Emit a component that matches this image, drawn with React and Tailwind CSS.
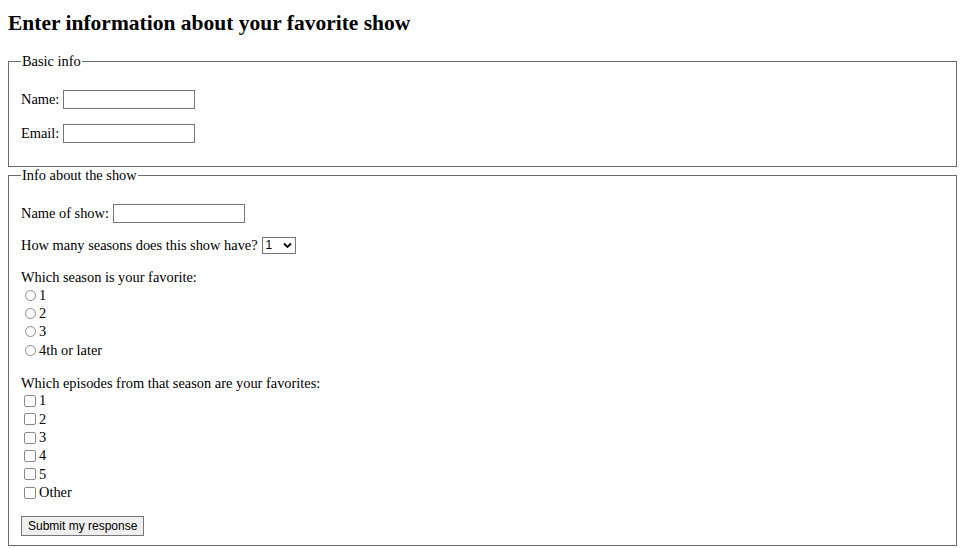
import React from 'react';

const seasons = ['1', '2', '3', '4th or later'];
const episodes = ['1', '2', '3', '4', '5', 'Other'];

const TextInput = () => (
  <input type="text" className="w-[132px] h-[19px] border border-[#767676] bg-white px-1 text-[13px] outline-none" />
);

const Radio = ({ label }) => (
  <label className="flex items-center h-[18.4px]">
    <span className="ml-[4px] mr-[3px] w-[11px] h-[11px] rounded-full border border-[#8a8a8a] bg-white" />
    <span>{label}</span>
  </label>
);

const Check = ({ label }) => (
  <label className="flex items-center h-[18.4px]">
    <span className="ml-[3px] mr-[3px] w-[12px] h-[12px] rounded-[2px] border border-[#8a8a8a] bg-white" />
    <span>{label}</span>
  </label>
);

export default function App() {
  return (
    <div className="min-h-screen bg-white text-black font-['Liberation_Serif','Times_New_Roman',serif] text-[14.4px] leading-[15px] pl-2 pr-[7px]">
      <h2 className="pt-[11px] text-[21.5px] leading-[24px] font-bold">Enter information about your favorite show</h2>

      <fieldset className="mt-[19px] border border-[#6b6b6b] pl-3 pr-3 pb-[23px]">
        <legend className="px-[1px] leading-[15px]">Basic info</legend>
        <div className="mt-[21px] flex items-center gap-[4px]">
          <span>Name:</span>
          <TextInput />
        </div>
        <div className="mt-[15px] flex items-center gap-[4px]">
          <span>Email:</span>
          <TextInput />
        </div>
      </fieldset>

      <fieldset className="mt-[1px] border border-[#6b6b6b] pl-3 pr-3 pb-[9px]">
        <legend className="px-[1px] leading-[15px]">Info about the show</legend>
        <div className="mt-[21px] flex items-center gap-[4px]">
          <span>Name of show:</span>
          <TextInput />
        </div>
        <div className="mt-[14px] flex items-center gap-[4px]">
          <span>How many seasons does this show have?</span>
          <div className="flex items-center justify-between w-[34px] h-[17px] border border-[#767676] bg-white pl-[3px] pr-[3px] font-['Liberation_Sans',Arial,sans-serif] text-[12px]">
            <span>1</span>
            <svg width="9" height="7" viewBox="0 0 9 7" fill="none" stroke="#000" strokeWidth="1.8">
              <path d="M1 1.5l3.5 3.5 3.5-3.5" />
            </svg>
          </div>
        </div>

        <div className="mt-[16px]">Which season is your favorite:</div>
        <div className="flex flex-col mt-[1px]">
          {seasons.map((s) => (
            <Radio key={s} label={s} />
          ))}
        </div>

        <div className="mt-[16px]">Which episodes from that season are your favorites:</div>
        <div className="flex flex-col mt-[1px]">
          {episodes.map((e) => (
            <Check key={e} label={e} />
          ))}
        </div>

        <button className="mt-[14px] h-[20px] px-[6px] border border-[#767676] bg-[#efefef] font-['Liberation_Sans',Arial,sans-serif] text-[12px] leading-[16px]">
          Submit my response
        </button>
      </fieldset>
    </div>
  );
}
